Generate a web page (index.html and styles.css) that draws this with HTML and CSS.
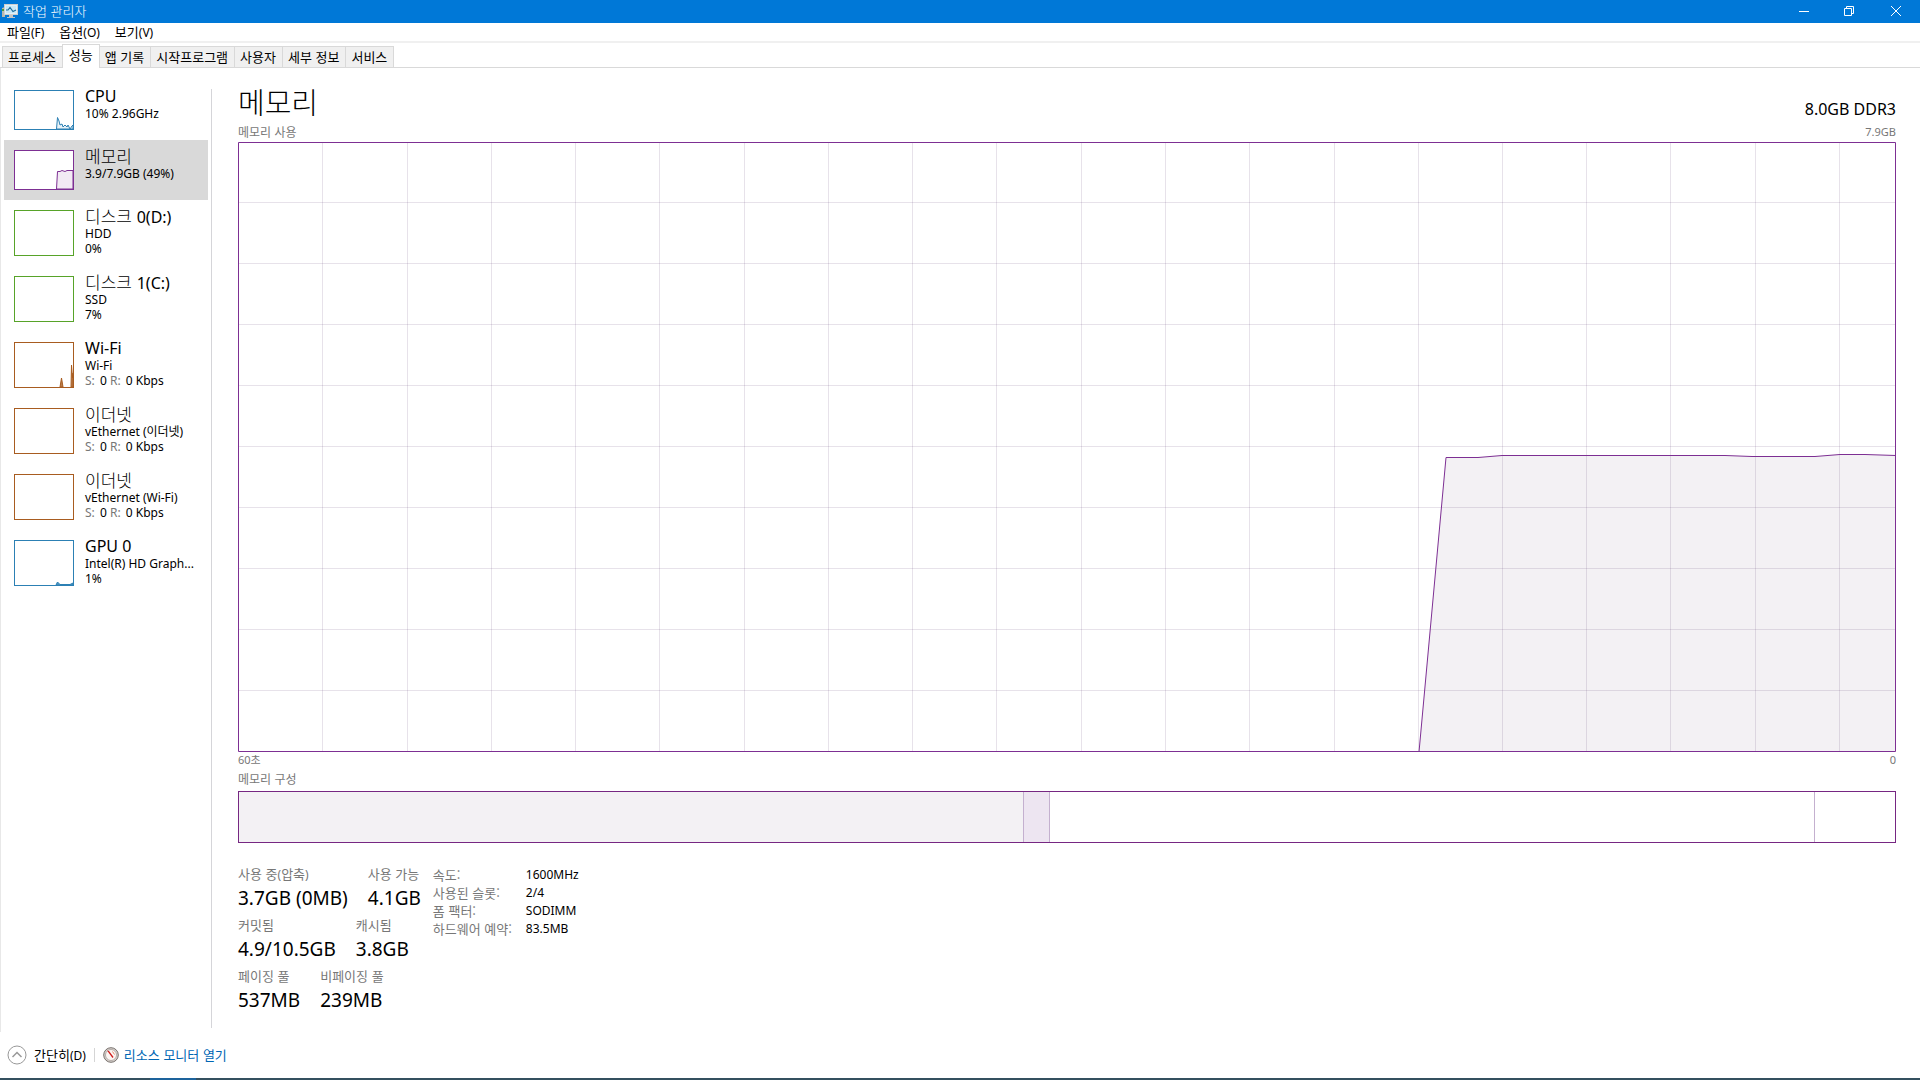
FILE: index.html
```html
<!DOCTYPE html>
<html lang="ko">
<head>
<meta charset="utf-8">
<title>작업 관리자</title>
<link rel="stylesheet" href="styles.css">
</head>
<body>
<header class="titlebar">
  <svg class="app-icon" width="18" height="16" viewBox="0 0 18 16" aria-hidden="true">
    <path d="M0 5l3-1v10H0z" fill="#b9b9b0"/><path d="M0 6h2v2H0z" fill="#4c9a3c"/>
    <rect x="2.500" y="1.500" width="13" height="10" fill="#dff1fa" stroke="#cfcfcf"/>
    <rect x="4" y="3" width="10" height="7" fill="#c8e8f7"/>
    <path d="M4 7h2l2-2.500 3 4L14 7" fill="none" stroke="#1e6fa0" stroke-width="1.200"/>
    <path d="M7 12h4v2h2v1H5v-1h2z" fill="#c4c4c4"/>
  </svg>
  <h1 class="app-title">작업 관리자</h1>
  <div class="window-controls">
    <button class="win-btn" type="button" aria-label="최소화"><svg width="10" height="10" viewBox="0 0 10 10"><path d="M0 5.500h10"/></svg></button>
    <button class="win-btn" type="button" aria-label="이전 크기로 복원"><svg width="10" height="10" viewBox="0 0 10 10"><path d="M.5 2.500h7v7h-7zM2.500 2.500v-2h7v7h-2"/></svg></button>
    <button class="win-btn" type="button" aria-label="닫기"><svg width="10" height="10" viewBox="0 0 10 10"><path d="M0 0l10 10M10 0L0 10"/></svg></button>
  </div>
</header>
<nav class="menubar">
  <button type="button">파일<span class="lat">(F)</span></button>
  <button type="button">옵션<span class="lat">(O)</span></button>
  <button type="button">보기<span class="lat">(V)</span></button>
</nav>
<div class="tabs" role="tablist">
  <button class="tab" role="tab" type="button">프로세스</button>
  <button class="tab active" role="tab" type="button" aria-selected="true">성능</button>
  <button class="tab" role="tab" type="button">앱 기록</button>
  <button class="tab" role="tab" type="button">시작프로그램</button>
  <button class="tab" role="tab" type="button">사용자</button>
  <button class="tab" role="tab" type="button">세부 정보</button>
  <button class="tab" role="tab" type="button">서비스</button>
</div>
<div class="content">
  <aside class="sidebar">
    <button class="item short" type="button">
      <svg class="thumb blue" viewBox="0 0 60 40"><path class="plot" d="M42.500 39L43.500 27.500L45 31L46 35L48 34L49 37L51 35L53 37L54 35L56 39L58 36L59 35V39z"/><rect class="frame" x=".5" y=".5" width="59" height="39"/></svg>
      <span class="info"><span class="name lat">CPU</span><span class="lat">10% 2.96GHz</span></span>
    </button>
    <button class="item short selected" type="button">
      <svg class="thumb purple" viewBox="0 0 60 40"><path class="plot" d="M42.500 39L43.500 21.500H46L48 20.500L51 21.500L53 20.500H59V39z"/><rect class="frame" x=".5" y=".5" width="59" height="39"/></svg>
      <span class="info"><span class="name">메모리</span><span class="lat">3.9/7.9GB (49%)</span></span>
    </button>
    <button class="item" type="button">
      <svg class="thumb green" viewBox="0 0 60 46"><rect class="frame" x=".5" y=".5" width="59" height="45"/></svg>
      <span class="info"><span class="name">디스크 <span class="lat">0(D:)</span></span><span class="lat">HDD</span><span class="lat">0%</span></span>
    </button>
    <button class="item" type="button">
      <svg class="thumb green" viewBox="0 0 60 46"><rect class="frame" x=".5" y=".5" width="59" height="45"/></svg>
      <span class="info"><span class="name">디스크 <span class="lat">1(C:)</span></span><span class="lat">SSD</span><span class="lat">7%</span></span>
    </button>
    <button class="item" type="button">
      <svg class="thumb brown" viewBox="0 0 60 46"><path class="plot solid" d="M46 45L47.500 36L49 45zM57 45L57.500 23L58.500 36L59 31V45z"/><rect class="frame" x=".5" y=".5" width="59" height="45"/></svg>
      <span class="info"><span class="name lat">Wi-Fi</span><span class="lat">Wi-Fi</span><span class="lat rate"><i>S:</i> 0 <i>R:</i> 0 Kbps</span></span>
    </button>
    <button class="item" type="button">
      <svg class="thumb brown" viewBox="0 0 60 46"><rect class="frame" x=".5" y=".5" width="59" height="45"/></svg>
      <span class="info"><span class="name">이더넷</span><span class="lat">vEthernet (이더넷)</span><span class="lat rate"><i>S:</i> 0 <i>R:</i> 0 Kbps</span></span>
    </button>
    <button class="item" type="button">
      <svg class="thumb brown" viewBox="0 0 60 46"><rect class="frame" x=".5" y=".5" width="59" height="45"/></svg>
      <span class="info"><span class="name">이더넷</span><span class="lat">vEthernet (Wi-Fi)</span><span class="lat rate"><i>S:</i> 0 <i>R:</i> 0 Kbps</span></span>
    </button>
    <button class="item" type="button">
      <svg class="thumb blue" viewBox="0 0 60 46"><path class="plot solid" d="M42 45L43.500 42L46 44.500H50H56L59 43V45z"/><rect class="frame" x=".5" y=".5" width="59" height="45"/></svg>
      <span class="info"><span class="name lat">GPU 0</span><span class="lat">Intel(R) HD Graph...</span><span class="lat">1%</span></span>
    </button>
  </aside>
  <main class="detail">
    <div class="heading"><h2>메모리</h2><span class="spec">8.0GB DDR3</span></div>
    <div class="caption"><span>메모리 사용</span><span class="lat">7.9GB</span></div>
    <svg class="chart" viewBox="0 0 1658 610" preserveAspectRatio="none" role="img" aria-label="메모리 사용">
      <path class="area" d="M1181 610L1208 315.500H1240L1264 313.500H1487L1514 314.500H1577L1602 312.500H1627L1658 313.500V610z"/>
      <path class="grid" d="M84.500 0V610M169.500 0V610M253.500 0V610M337.500 0V610M421.500 0V610M506.500 0V610M590.500 0V610M674.500 0V610M758.500 0V610M843.500 0V610M927.500 0V610M1011.500 0V610M1096.500 0V610M1180.500 0V610M1264.500 0V610M1348.500 0V610M1432.500 0V610M1517.500 0V610M1601.500 0V610M0 60.500H1658M0 121.500H1658M0 182.500H1658M0 243.500H1658M0 304.500H1658M0 365.500H1658M0 426.500H1658M0 487.500H1658M0 548.500H1658"/>
      <path class="line" d="M1181 610L1208 315.500H1240L1264 313.500H1487L1514 314.500H1577L1602 312.500H1627L1658 313.500"/>
      <rect class="line" x=".5" y=".5" width="1657" height="609"/>
    </svg>
    <div class="caption axis"><span class="lat">60초</span><span class="lat">0</span></div>
    <div class="caption">메모리 구성</div>
    <div class="composition"><div class="seg used"></div><div class="seg modified"></div><div class="seg standby"></div><div class="seg free"></div></div>
    <div class="stats">
      <div class="counters">
        <dl class="row"><div><dt>사용 중<span class="lat">(</span>압축<span class="lat">)</span></dt><dd>3.7GB (0MB)</dd></div><div><dt>사용 가능</dt><dd>4.1GB</dd></div></dl>
        <dl class="row"><div><dt>커밋됨</dt><dd>4.9/10.5GB</dd></div><div><dt>캐시됨</dt><dd>3.8GB</dd></div></dl>
        <dl class="row"><div><dt>페이징 풀</dt><dd>537MB</dd></div><div><dt>비페이징 풀</dt><dd>239MB</dd></div></dl>
      </div>
      <table class="hardware">
        <tr><th scope="row">속도:</th><td>1600MHz</td></tr>
        <tr><th scope="row">사용된 슬롯:</th><td>2/4</td></tr>
        <tr><th scope="row">폼 팩터:</th><td>SODIMM</td></tr>
        <tr><th scope="row">하드웨어 예약:</th><td>83.5MB</td></tr>
      </table>
    </div>
  </main>
</div>
<footer class="footer">
  <button class="fewer" type="button"><svg width="20" height="20" viewBox="0 0 20 20"><circle cx="10" cy="10" r="9" fill="#fff" stroke="#999"/><path d="M5.500 12L10 7.500L14.500 12" fill="none" stroke="#999" stroke-width="1.500"/></svg><span>간단히<span class="lat">(D)</span></span></button>
  <span class="sep"></span>
  <a class="monitor" href="#"><svg width="16" height="16" viewBox="0 0 16 16"><circle cx="8" cy="8" r="7.300" fill="#d9d4d0" stroke="#77706c"/><circle cx="8" cy="8" r="5.500" fill="#fbf6f3" stroke="#a8a09b" stroke-width=".8"/><path d="M4 3.500L6 4L10.500 10L9.500 11z" fill="#d01818"/><path d="M9.500 4.500l2 3" stroke="#e08a70" fill="none"/></svg><span>리소스 모니터 열기</span></a>
</footer>
<div class="taskbar-edge"></div>
</body>
</html>
```
FILE: styles.css
```css
* { box-sizing: border-box; margin: 0; padding: 0; }
body {
  min-height: 100vh;
  display: flex;
  flex-direction: column;
  background: #fff;
  color: #000;
  font: 13px/16px "Noto Sans CJK KR", sans-serif;
}
button { border: 0; background: none; font: inherit; color: inherit; text-align: left; white-space: nowrap; }
svg { display: block; flex: none; }
.lat { font-family: "Noto Sans", "Noto Sans CJK KR", sans-serif; font-size: 12px; }

.titlebar { display: flex; align-items: center; height: 23px; padding: 0 0 2px 2px; background: #0078d7; color: #fff; }
.app-title { margin-left: 3px; font-size: 13px; font-weight: 300; }
.window-controls { display: flex; margin-left: auto; }
.win-btn { display: flex; align-items: center; justify-content: center; width: 45px; height: 20px; }
.win-btn:last-child { width: 49px; }
.win-btn path { fill: none; stroke: #fff; }

.menubar { display: flex; gap: 15px; height: 20px; padding: 1px 7px; border-bottom: 2px solid #f0f0f0; }

.tabs { display: flex; align-items: flex-end; height: 25px; padding-left: 2px; border-bottom: 1px solid #d9d9d9; }
.tab { height: 21px; padding: 0 6px 0 5px; border: 1px solid #d9d9d9; border-bottom: 0; border-left: 0; background: #f0f0f0; }
.tab:first-child { border-left: 1px solid #d9d9d9; border-right: 0; }
.tab.active { height: 24px; margin-bottom: -1px; padding: 0 6px 4px; border-left: 1px solid #d9d9d9; background: #fff; }

.content { flex: 1; display: flex; border-left: 1px solid #e8e8e8; padding: 12px 24px 4px 3px; }
.sidebar { width: 208px; flex: none; padding-right: 3px; border-right: 1px solid #d5d5d9; border-image: linear-gradient(#fff 10px, #d5d5d9 10px) 1; }
.item { display: flex; gap: 11px; width: 100%; height: 66px; padding: 10px 0 0 10px; line-height: 15px; }
.item.short { height: 60px; }
.item.selected { background: #d9d9d9; }
.thumb { width: 60px; height: 46px; background: #fff; }
.short .thumb { height: 40px; }
.frame { fill: none; stroke: currentColor; }
.plot { stroke: currentColor; fill: currentColor; fill-opacity: .1; }
.solid { fill-opacity: .8; }
.blue { color: #2c80b4; }
.purple { color: #7d2f93; }
.green { color: #57a329; }
.brown { color: #a85c20; }
.info { display: flex; flex-direction: column; margin-top: -4px; }
.name { height: 20px; font-size: 17px; line-height: 20px; font-weight: 300; }
.name.lat, .name .lat { font-size: 16px; font-weight: 400; }
.name .lat { line-height: 16px; }
.rate i { margin-right: 2px; font-style: normal; color: #777; }

.detail { flex: 1; min-width: 0; display: flex; flex-direction: column; padding-left: 26px; }
.heading { display: flex; justify-content: space-between; align-items: flex-end; height: 45px; }
.heading h2 { font-size: 29px; line-height: 48px; font-weight: 300; }
.spec { font: 16px/32px "Noto Sans", sans-serif; }
.caption { display: flex; justify-content: space-between; height: 17px; font-size: 12px; line-height: 14px; color: #777; }
.caption .lat { font-size: 11px; }
.caption.axis { height: 20px; line-height: 16px; }
.axis + .caption { height: 19px; }
.chart { width: 100%; flex: 1 1 0; min-height: 200px; }
.chart path, .chart rect { vector-effect: non-scaling-stroke; fill: none; }
.chart .area { fill: #f3f1f4; }
.chart .grid { stroke: #5f3a70; stroke-opacity: .15; }
.chart .line { stroke: #7d2f93; }
.composition { display: flex; height: 52px; border: 1px solid #762782; }
.seg { border-right: 1px solid #c4b0cf; }
.used { flex: 785; background: #f3f1f4; }
.modified { flex: 25; background: #ede5f1; }
.standby { flex: 766; }
.free { flex: 80; border-right: 0; }
.stats { display: flex; gap: 12px; height: 185px; padding-top: 22px; }
.row { display: flex; gap: 20px; height: 51px; }
.row dt { height: 18px; line-height: 18px; color: #777; }
.row dd { font: 19px/30px "Noto Sans", sans-serif; }
.hardware { align-self: flex-start; margin-top: 1px; border-collapse: collapse; }
.hardware th { width: 93px; height: 18px; font-weight: 400; line-height: 16px; text-align: left; color: #777; }
.hardware td { font: 12px/18px "Noto Sans", sans-serif; }

.footer { display: flex; align-items: center; height: 46px; padding-left: 7px; }
.fewer, .monitor { display: flex; align-items: center; gap: 7px; }
.monitor { gap: 5px; color: #0066b4; text-decoration: none; }
.sep { width: 1px; height: 14px; margin: 0 8px; background: #d5d5d5; }
.taskbar-edge { height: 2px; background: linear-gradient(90deg, #34505f 150px, #1d639c 150px, #1d639c 196px, #34505f 196px); }
```
